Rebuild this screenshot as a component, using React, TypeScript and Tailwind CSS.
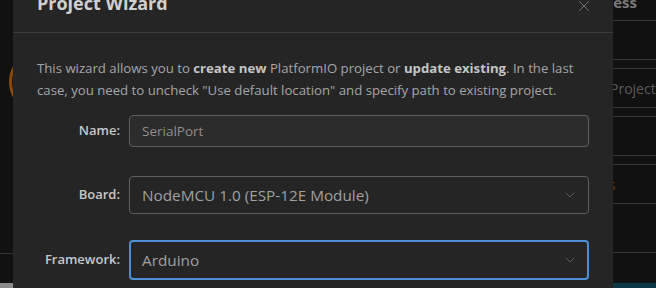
import { ChevronDown, X } from 'lucide-react'

const font = { fontFamily: '"Open Sans", "Noto Sans", sans-serif' }

function Field({ label, children, className }: { label: string; children: React.ReactNode; className?: string }) {
  return (
    <div className={`flex items-center ${className ?? ''}`}>
      <div className="w-[92px] pr-[9px] text-right text-[13px] font-semibold text-[#c8c8c8]">{label}</div>
      {children}
    </div>
  )
}

export default function App() {
  return (
    <div className="flex h-[288px] w-[656px] overflow-hidden bg-[#111111]" style={font}>
      {/* backdrop, left */}
      <div className="relative flex w-[13px] flex-col overflow-hidden">
        <div className="absolute left-[9px] top-[50px] h-[64px] w-[64px] rounded-full border-[3px] border-[#8a4a05]" />
        <div className="mt-[253px] h-px bg-[#333]" />
        <div className="mt-auto h-[5px] bg-[#8a8a8a]" />
      </div>

      {/* modal */}
      <div className="flex w-[600px] flex-col bg-[#252526]">
        <div className="relative h-[33px] border-b border-[#3c3c3c] px-6">
          <div className="-mt-[9px] text-[18px] font-bold leading-6 text-[#d0d0d0]">Project Wizard</div>
          <X className="absolute right-[20px] -top-[3px] h-[18px] w-[18px] text-[#8a8a8a]" strokeWidth={1} />
        </div>

        <div className="px-6 pt-[24px]">
          <p className="text-[13.2px] leading-[22px] text-[#a6a6a6]">
            This wizard allows you to <b className="text-[#c4c4c4]">create new</b> PlatformIO project or{' '}
            <b className="text-[#c4c4c4]">update existing</b>. In the last case, you need to uncheck "Use default
            location" and specify path to existing project.
          </p>

          <Field label="Name:" className="mt-[14px]">
            <div className="flex h-[32px] w-[460px] items-center rounded-[4px] border border-[#5f5f5f] bg-[#2c2c2c] px-3 text-[13.5px] text-[#8e8e8e]">
              SerialPort
            </div>
          </Field>

          <Field label="Board:" className="mt-[29px]">
            <div className="flex h-[38px] w-[460px] items-center justify-between rounded-[4px] border border-[#5f5f5f] bg-[#252526] pl-3 pr-[10px] text-[15.3px] text-[#a0a0a0]">
              <span>NodeMCU 1.0 (ESP-12E Module)</span>
              <ChevronDown className="h-[16px] w-[16px] text-[#6a6a6a]" strokeWidth={1.25} />
            </div>
          </Field>

          <Field label="Framework:" className="mt-[26px]">
            <div className="flex h-[40px] w-[460px] items-center justify-between rounded-[4px] border-2 border-[#4f8fd6] bg-[#252526] pl-[11px] pr-[9px] text-[15.3px] text-[#a0a0a0]">
              <span>Arduino</span>
              <ChevronDown className="h-[16px] w-[16px] text-[#6a6a6a]" strokeWidth={1.25} />
            </div>
          </Field>
        </div>
      </div>

      {/* backdrop, right */}
      <div className="flex flex-1 flex-col overflow-hidden text-[#3e3e3e]">
        <div className="-ml-[33px] -mt-[8px] whitespace-nowrap text-[15px] font-bold leading-5 text-[#7a7a7a]">Process</div>
        <div className="mt-[8px] h-px bg-[#3a3a3a]" />
        <div className="mt-[38px] h-px bg-[#3a3a3a]" />
        <div className="mt-[8px] h-px bg-[#3a3a3a]" />
        <div className="mt-[10px] -ml-[3px] whitespace-nowrap text-[14px] leading-5 text-[#5a5a5a]">Project</div>
        <div className="mt-[8px] h-px bg-[#3a3a3a]" />
        <div className="mt-[8px] h-px bg-[#3a3a3a]" />
        <div className="mt-[38px] h-px bg-[#3a3a3a]" />
        <div className="mt-[8px] h-px bg-[#3a3a3a]" />
        <div className="mt-[10px] -ml-[4px] whitespace-nowrap text-[14px] leading-5 text-[#6a3c0a]">s</div>
        <div className="mt-[8px] h-px bg-[#3a3a3a]" />
        <div className="mt-[48px] h-px bg-[#3a3a3a]" />
        <div className="mt-auto h-[5px] bg-[#0b3a46]" />
      </div>
    </div>
  )
}
